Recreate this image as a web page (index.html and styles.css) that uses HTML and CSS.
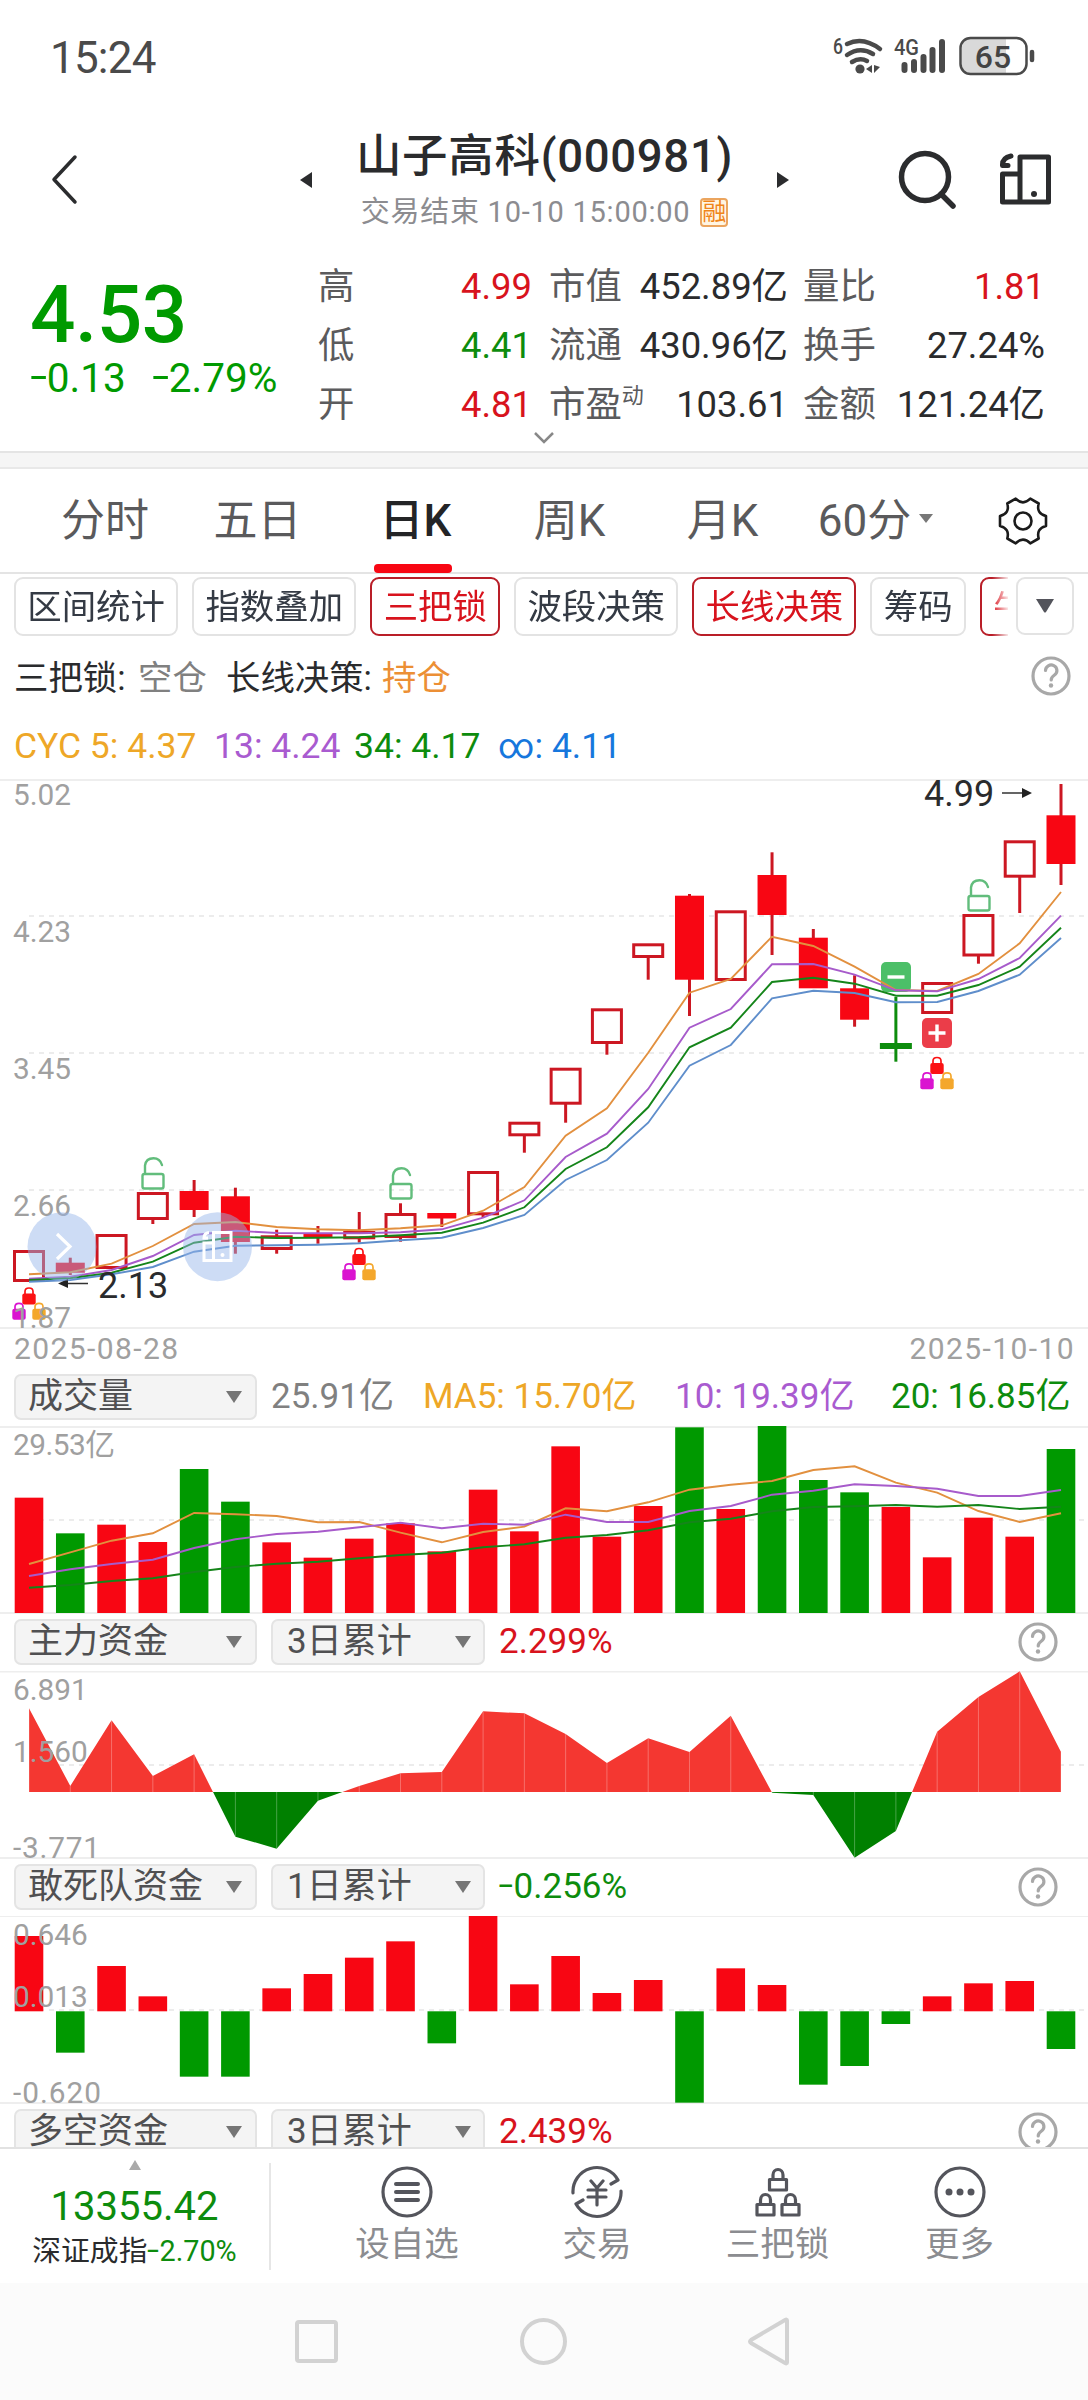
FILE: index.html
```html
<!DOCTYPE html>
<html lang="zh-CN">
<head>
<meta charset="utf-8">
<title>山子高科(000981)</title>
<link rel="stylesheet" href="styles.css">
</head>
<body>
<div class="status">
  <span class="clock">15:24</span>
  <svg class="status-icons" width="206" height="44" viewBox="832 35 206 44">
    <text x="833" y="54" class="tiny" textLength="10" lengthAdjust="spacingAndGlyphs">6</text>
    <g fill="none" stroke="#4a4a4a" stroke-width="4.5" stroke-linecap="round">
      <path d="M847 44Q863 36 880 49M847 55Q860 46 873 54M852 62Q860 57 867 61"/>
    </g>
    <circle cx="860" cy="69" r="4.6" fill="#4a4a4a"/>
    <path d="M866 69l6-4v8zM874 65v8l6-6z" fill="#4a4a4a"/>
    <text x="894" y="55" class="tiny" textLength="25" lengthAdjust="spacingAndGlyphs">4G</text>
    <g stroke="#4a4a4a" stroke-width="6" stroke-linecap="round">
      <path d="M904.500 65v5M914 62v8M923.500 57v13M932.500 50v20M942 42v28"/>
    </g>
    <path d="M970 38.500h36v35h-36a8 8 0 0 1-8-8v-19a8 8 0 0 1 8-8z" fill="#d9d9d9"/>
    <rect x="960.500" y="38" width="66" height="36" rx="10" fill="none" stroke="#4a4a4a" stroke-width="2.500"/>
    <path d="M1032 52v8" stroke="#4a4a4a" stroke-width="4.500" stroke-linecap="round"/>
    <text x="993" y="67.500" class="battery" text-anchor="middle">65</text>
  </svg>
</div>

<header class="header">
  <svg class="back" width="30" height="52" viewBox="0 0 30 52"><path d="M25 3L4 25.500L25 48" /></svg>
  <svg class="prev" width="14" height="18" viewBox="0 0 14 18"><path d="M0 9L12 1v16z"/></svg>
  <div class="title">
    <h1>山子高科(000981)</h1>
    <p>交易结束 10-10 15:00:00 <b>融</b></p>
  </div>
  <svg class="next" width="14" height="18" viewBox="0 0 14 18"><path d="M13 9L1 1v16z"/></svg>
  <svg class="search" width="60" height="60" viewBox="896 150 60 60"><circle cx="924" cy="177" r="23.500"/><path d="M940 194l12 12"/></svg>
  <svg class="switch" width="54" height="54" viewBox="998 153 54 54"><use href="#switch-glyph"/></svg>
</header>

<section class="quote">
  <div class="price">
    <strong>4.53</strong>
    <div><span><i class="dash">-</i>0.13</span><span><i class="dash">-</i>2.79%</span></div>
  </div>
  <div class="figures">
    <span>高</span><b class="up">4.99</b><span>市值</span><b>452.89亿</b><span>量比</span><b class="up">1.81</b>
    <span>低</span><b class="down">4.41</b><span>流通</span><b>430.96亿</b><span>换手</span><b>27.24%</b>
    <span>开</span><b class="up">4.81</b><span>市盈<sup>动</sup></span><b>103.61</b><span>金额</span><b>121.24亿</b>
  </div>
  <svg class="expand" width="22" height="14" viewBox="0 0 22 14"><path d="M2 2l9 9l9-9"/></svg>
</section>

<nav class="tabs">
  <span>分时</span><span>五日</span><span class="active">日K</span><span>周K</span><span>月K</span><span>60分<i></i></span>
  <svg width="50" height="50" viewBox="-25 -25 50 50"><path d="M23 4.900Q13 7.500 15.700 17.500L7.300 22.300Q0 15 -7.300 22.300L-15.700 17.500Q-13 7.500 -23 4.900V-4.900Q-13 -7.500 -15.700 -17.500L-7.300 -22.300Q0 -15 7.300 -22.300L15.700 -17.500Q13 -7.500 23 -4.900Z"/><circle r="8.500"/></svg>
</nav>

<div class="chips">
  <div class="chip-strip">
    <span>区间统计</span><span>指数叠加</span><span class="on">三把锁</span><span>波段决策</span><span class="on">长线决策</span><span>筹码</span><span class="on">牛</span>
  </div>
  <div class="more"><svg width="20" height="16" viewBox="0 0 20 16"><path d="M1 1h18l-8 13q-1 1-2 0z"/></svg></div>
</div>

<div class="strategy">
  <span class="k1">三把锁:</span><span class="gray">空仓</span><span class="k2">长线决策:</span><span class="hold">持仓</span>
  <svg class="help" width="42" height="42" viewBox="-21 -21 42 42"><use href="#help-glyph"/></svg>
</div>
<div class="cyc"><span class="gold">CYC 5: 4.37</span><span class="violet">13: 4.24</span><span class="down">34: 4.17</span><span class="azure">∞: 4.11</span></div>

<svg id="kline" width="1088" height="550" viewBox="0 779 1088 550"></svg>
<div class="dates"><span>2025-08-28</span><span>2025-10-10</span></div>

<div class="bar volume">
  <div class="select wide">成交量<i></i></div>
  <span class="v1">25.91亿</span><span class="v2">MA5: 15.70亿</span><span class="v3">10: 19.39亿</span><span class="v4">20: 16.85亿</span>
</div>
<svg id="volume" width="1088" height="188" viewBox="0 1426 1088 188"></svg>

<div class="bar">
  <div class="select wide">主力资金<i></i></div><div class="select">3日累计<i></i></div>
  <span class="value up">2.299%</span>
  <svg class="help" width="42" height="42" viewBox="-21 -21 42 42"><use href="#help-glyph"/></svg>
</div>
<svg id="main-fund" width="1088" height="188" viewBox="0 1671 1088 188"></svg>

<div class="bar">
  <div class="select wide">敢死队资金<i></i></div><div class="select">1日累计<i></i></div>
  <span class="value down"><i class="dash">-</i>0.256%</span>
  <svg class="help" width="42" height="42" viewBox="-21 -21 42 42"><use href="#help-glyph"/></svg>
</div>
<svg id="hot-fund" width="1088" height="188" viewBox="0 1916 1088 188"></svg>

<div class="bar cut">
  <div class="select wide">多空资金<i></i></div><div class="select">3日累计<i></i></div>
  <span class="value up">2.439%</span>
  <svg class="help" width="42" height="42" viewBox="-21 -21 42 42"><use href="#help-glyph"/></svg>
</div>

<footer class="dock">
  <div class="index">
    <svg width="12" height="10" viewBox="0 0 12 10"><path d="M6 0l6 10H0z"/></svg>
    <strong>13355.42</strong>
    <p>深证成指<em><i class="dash">-</i>2.70%</em></p>
  </div>
  <div class="item">
    <svg width="54" height="54" viewBox="-27 -27 54 54"><circle r="24"/><path d="M-11 -8H11M-11 0H11M-11 8H11" stroke-width="4"/></svg>
    <span>设自选</span>
  </div>
  <div class="item">
    <svg width="54" height="54" viewBox="-27 -27 54 54"><path d="M-24 1A24 24 0 0 1 21 -12L14 -8M24 -1A24 24 0 0 1 -21 12L-14 8M-6 -11L0 -4L6 -11M0 -4V13M-9 -2H9M-9 5H9"/></svg>
    <span>交易</span>
  </div>
  <div class="item">
    <svg width="54" height="54" viewBox="-27 -27 54 54"><g id="lock-outline"><path d="M-8.500 -12.500H8.500V-2H-8.500ZM-5 -13V-17A5 5.500 0 0 1 5 -17V-13"/></g><use href="#lock-outline" x="-12.500" y="25"/><use href="#lock-outline" x="12.500" y="25"/></svg>
    <span>三把锁</span>
  </div>
  <div class="item">
    <svg width="54" height="54" viewBox="-27 -27 54 54"><circle r="24"/><g fill="#54555c" stroke="none"><circle cx="-11" r="3.500"/><circle r="3.500"/><circle cx="11" r="3.500"/></g></svg>
    <span>更多</span>
  </div>
</footer>

<div class="system">
  <svg width="1088" height="117" viewBox="0 2283 1088 117"><rect x="297" y="2322" width="39" height="39" rx="2"/><circle cx="543.500" cy="2341.500" r="21.500"/><path d="M787 2320.500V2362.500Q787 2364 785 2363L751 2343Q749 2341.500 751 2340L785 2320Q787 2319 787 2320.500Z"/></svg>
</div>

<svg class="defs" width="0" height="0">
  <defs>
    <g id="help-glyph" fill="none" stroke="#a8a8a8" stroke-width="3.200" stroke-linecap="round">
      <circle r="18"/><path d="M-5.500 -5.500A5.700 5.500 0 1 1 3.500 -1Q0.200 1.200 0.200 4"/><circle cy="9.500" r="2.200" fill="#a8a8a8" stroke="none"/>
    </g>
    <g id="switch-glyph" fill="none" stroke="#2b2c2e" stroke-width="5" stroke-linejoin="round" stroke-linecap="round">
      <path d="M1019 157h28.500v45h-28.500zM1019 174H1001.500V202H1019M1010 156Q1001 158 1001.500 165.500H1007"/>
      <circle cx="1033" cy="194" r="3" fill="#2b2c2e" stroke="none"/>
    </g>
  </defs>
</svg>
<script src="charts.js"></script>
</body>
</html>
```
FILE: styles.css
```css
* { box-sizing: border-box; }
body {
  margin: 0;
  width: 1088px;
  height: 2400px;
  overflow: hidden;
  background: #fff;
  color: #2a2b2d;
  font-family: Roboto, "Noto Sans CJK SC", sans-serif;
}
svg { display: block; flex: none; }
h1, p { margin: 0; font-weight: 400; }
b, strong { font-weight: 400; }
.defs { position: absolute; }

.up { color: #d8131d; }
.down { color: #0d8c0d; }
.gray { color: #808080; }
.hold { color: #ec8f35; }
.gold { color: #eea727; }
.violet { color: #a95bd0; }
.azure { color: #1677dd; }

/* widened minus sign, raised to the middle of the digits */
.dash { display: inline-block; margin: 0 0.07em; font-style: normal; transform: translateY(-0.05em) scaleX(1.5); }

/* status bar */
.status { height: 110px; padding: 35px 50px 0 50px; display: flex; justify-content: space-between; }
.status-icons { overflow: visible; }
.clock { font-size: 44px; line-height: 46px; color: #4a4a4a; letter-spacing: -0.8px; }
.tiny { font: 500 22px Roboto, sans-serif; fill: #4a4a4a; }
.battery { font: 500 32px Roboto, sans-serif; fill: #444; }

/* title bar */
.header { height: 140px; display: flex; align-items: flex-start; }
.back { margin: 44px 0 0 50px; fill: none; stroke: #2b2c2e; stroke-width: 3.5; stroke-linecap: round; stroke-linejoin: round; }
.prev { margin: 61px 0 0 220px; fill: #2b2c2e; }
.next { margin: 61px 0 0 31px; fill: #2b2c2e; }
.title { margin-left: 30px; width: 401px; text-align: center; }
.title h1 { margin-top: 14px; font-size: 45.5px; line-height: 66px; letter-spacing: 0.7px; font-weight: 500; white-space: nowrap; }
.title p { display: flex; align-items: center; justify-content: center; margin-top: 2px; font-size: 29px; line-height: 40px; letter-spacing: 0.75px; color: #8c8c90; white-space: pre; }
.title b { margin-left: 2px; width: 28px; height: 29px; border: 2px solid #eba55f; border-radius: 4px; background: #fff5e3; color: #f08519; font-size: 24px; line-height: 24px; letter-spacing: 0; text-align: center; }
.search { margin: 40px 0 0 107px; fill: none; stroke: #2b2c2e; stroke-width: 5.5; stroke-linecap: round; }
.switch { margin: 43px 0 0 42px; }

/* quote */
.quote { position: relative; height: 203px; display: flex; border-bottom: 2px solid #e4e4e4; }
.price { width: 318px; padding: 23px 0 0 30px; color: #009a00; }
.price strong { display: block; font-size: 80px; line-height: 84px; font-weight: 500; letter-spacing: -0.5px; }
.price div { display: flex; gap: 26px; font-size: 40.5px; line-height: 42px; }
.figures { height: 178px; margin-top: 7px; width: 727px; display: grid; grid-template-columns: 70px 144px 17px 72px 167px 15px 75px 167px; grid-auto-rows: 59px; align-items: center; font-size: 36.4px; line-height: 59px; white-space: nowrap; }
.figures span:nth-of-type(3n+1) { grid-column: 1; }
.figures span:nth-of-type(3n+2) { grid-column: 4; }
.figures span:nth-of-type(3n) { grid-column: 7; }
.figures span { color: #5b5b5d; }
.figures b { text-align: right; }
.figures sup { font-size: 22px; line-height: 20px; vertical-align: 14px; }
.expand { position: absolute; left: 533px; top: 181px; fill: none; stroke: #888; stroke-width: 2.5; }

/* period tabs */
.tabs { margin-top: 14px; border-top: 2px solid #e8e8e8; border-bottom: 2px solid #e4e4e4; height: 107px; display: grid; grid-template-columns: 152px 153px 163px 145px 161px 145px 1fr; padding-left: 29px; color: #5a5a5c; font-size: 44px; line-height: 104px; text-align: center; box-shadow: 0 -14px 0 #f5f5f5; }
.tabs span { position: relative; white-space: nowrap; }
.tabs .active { color: #232426; font-weight: 500; }
.tabs .active::after { content: ""; position: absolute; left: 40px; bottom: 0; width: 78px; height: 9px; border-radius: 4px; background: #f80613; }
.tabs i { display: inline-block; margin-left: 8px; vertical-align: 13px; border: 7px solid transparent; border-top: 9px solid #777; border-bottom: 0; }
.tabs svg { margin: 27px 0 0 50px; fill: none; stroke: #1b1b1b; stroke-width: 2.6; stroke-linejoin: round; }

/* indicator chips */
.chips { height: 67px; padding: 3px 14px 0; display: flex; justify-content: space-between; }
.chip-strip { width: 994px; display: flex; gap: 14px; overflow: hidden; -webkit-mask-image: linear-gradient(90deg, #000 978px, transparent 996px); mask-image: linear-gradient(90deg, #000 978px, transparent 996px); }
.chip-strip span { flex: none; height: 59px; border: 2px solid #e3e3e3; border-radius: 9px; padding: 0 11.3px; font-size: 34.4px; line-height: 56px; color: #343a44; }
.chip-strip .on { color: #d8131d; border-color: #b91e28; }
.more { width: 58px; height: 58px; border: 2px solid #e3e3e3; border-radius: 9px; display: flex; align-items: center; justify-content: center; fill: #53545b; }

/* indicator captions */
.strategy { height: 72px; padding: 0 0 5px 14px; display: grid; grid-template-columns: 124px 88px 156px 648px auto; align-items: center; font-size: 34.4px; }
.strategy .help { margin-top: 2px; }
.cyc { height: 66px; padding-left: 14px; display: grid; grid-template-columns: 200px 140px 144px auto; align-items: center; font-size: 35.5px; }
.dates { height: 42px; padding: 0 13px 0 14px; display: flex; justify-content: space-between; font-size: 30px; line-height: 39px; letter-spacing: 1.4px; color: #a0a0a0; }

/* indicator pane headers */
.bar { height: 57px; padding: 5px 0 0 14px; display: flex; font-size: 35px; line-height: 46px; white-space: nowrap; }
.bar.volume { height: 55px; padding-top: 3px; }
.bar.cut { height: 43px; overflow: hidden; }
.select { width: 214px; height: 46px; margin-right: 14px; padding: 0 12px 0 14px; border: 2px solid #e4e4e4; border-radius: 7px; background: #f4f4f4; color: #505052; line-height: 42px; display: flex; align-items: center; justify-content: space-between; }
.select.wide { width: 243px; margin-right: 14px; padding: 0 13px 0 12px; }
.select i { border: 8px solid transparent; border-top: 12px solid #757575; border-bottom: 0; }
.bar .value { width: 518px; }
.v1 { width: 152px; color: #808080; }
.v2 { width: 252px; color: #eea727; }
.v3 { width: 216px; color: #a95bd0; }
.v4 { color: #0d8c0d; }
.bar .help { margin-top: 2px; }

/* chart primitives */
.frame { stroke: #eee; stroke-width: 2; }
.grid { stroke: #ececec; stroke-width: 2; stroke-dasharray: 5 5; }
.axis { font: 29.8px Roboto, "Noto Sans CJK SC", sans-serif; fill: #a0a0a0; }
.extreme { font: 36px Roboto, sans-serif; fill: #2a2b2d; }
.line { fill: none; stroke-width: 1.9; }
.solid-r { fill: #f80613; }
.solid-g { fill: #009900; }
.hollow { fill: #fff; stroke: #cc1722; stroke-width: 3; }
.wick { stroke: #cc1722; stroke-width: 3; }
.green { stroke: #0d8c0d; }
.area-r { fill: #f43731; }
.area-g { fill: #008000; }

/* bottom dock */
.dock { height: 136px; border-top: 2px solid #e2e2e2; display: grid; grid-template-columns: 271px 272px 108px 253px 111px 73px; background: #fff; }
.index { height: 107px; margin-top: 14px; border-right: 2px solid #e6e6e6; display: flex; flex-direction: column; align-items: center; fill: #aaa; white-space: nowrap; }
.index svg { margin-top: -3px; }
.index strong { margin-top: 12px; font-size: 40px; line-height: 50px; color: #0d8c0d; }
.index p { margin-top: 2px; font-size: 28.8px; line-height: 34px; }
.index em { font-style: normal; color: #0d8c0d; }
.item { padding-top: 16px; display: flex; flex-direction: column; align-items: center; color: #8b8c90; font-size: 34.5px; line-height: 50px; white-space: nowrap; }
.item svg { fill: none; stroke: #54555c; stroke-width: 3.2; stroke-linecap: round; stroke-linejoin: round; }
.system { height: 117px; background: #fbfbfb; }
.system svg { fill: none; stroke: #d2d2d2; stroke-width: 4; }
```
FILE: charts.js
```js
const STEP = 41.28, X0 = 29;
const cx = i => X0 + STEP * i;
const poly = (ys, color, f = y => y) =>
  `<polyline class="line" stroke="${color}" points="${ys.map((y, i) => cx(i).toFixed(1) + ',' + f(y).toFixed(1)).join(' ')}"/>`;
const frame = y => `<path class="frame" d="M0 ${y}H1088"/>`;
const grid = y => `<path class="grid" d="M29 ${y}H1088"/>`;
const label = (y, t, w) => `<text class="axis" x="13" y="${y}"${w ? ` textLength="${w}"` : ''}>${t}</text>`;
const COLORS = ['#e2903f', '#a75bcb', '#15851a', '#5f8ecb'];

/* daily candles: [type, bodyTop, bodyBottom, wickTop, wickBottom] */
const candles = [
  ['h',1250,1282],['r',1262.7,1272.7,1257.7,1275],['h',1234,1269],['h',1192,1220,1192,1224],
  ['r',1191,1210,1180,1217],['r',1196.3,1242,1187.7,1253.7],['h',1235.3,1250,1229.7,1253.7],['r',1233,1237.5,1226,1243.7],
  ['h',1231,1239.3,1212,1242.7],['h',1213,1238,1203.3,1241.7],['r',1213,1218.5,1213,1227],['h',1171,1215.3,1171,1217.7],
  ['h',1121.7,1136.3,1122,1152.7],['h',1067.7,1104.7,1068,1122.7],['h',1008.3,1044,1009,1054.7],['h',943.3,958,944,979.7],
  ['r',895.7,979.7,894,1016],['h',910.3,981],['r',875,915,852.3,955],['r',937.7,988.3,929,988],
  ['r',988.3,1019.7,975.3,1026.7],['g',1043,1049,997,1061.7],['h',982,1014],['h',914,956.5,914,963.7],
  ['h',840.3,877.7,841,913],['r',815.3,864,784,885]
];
const cyc = [
  [1274.3,1272.3,1263.7,1246,1224,1222,1227,1229.3,1230.3,1228.3,1225.3,1210.7,1187,1135.7,1108.3,1052.7,992.7,979,936.7,946,966.7,990,991,974,943.3,892],
  [1278.7,1276.7,1270,1256,1235,1230.7,1233,1233.3,1233.3,1232.3,1229.3,1217.7,1200.3,1157,1133.7,1089,1027.7,1009,964.3,964,974.7,990.3,991.3,979,958,915.7],
  [1280,1278.3,1272.7,1261.7,1242.7,1236.7,1238,1237.7,1237.3,1235.3,1232.7,1222.7,1207.3,1169,1147.3,1107.3,1047.3,1027.7,982,977.7,983.7,995.7,995.7,985,966.7,927.7],
  [1281.7,1280,1274.3,1267,1251.7,1245.7,1245.3,1244.7,1243.3,1240.3,1237.7,1228,1215,1180,1160,1122.7,1065.7,1045,998.3,990.7,993,1002.3,1002,991,974.7,938]
];
const candle = ([t, a, b, hi, lo], i) => {
  const x = cx(i), g = t === 'g' ? ' green' : '';
  const wick = hi ? `<path class="wick${g}" d="M${x} ${hi}V${lo}"/>` : '';
  return wick + (t === 'r'
    ? `<rect class="solid-r" x="${x - 14.5}" y="${a}" width="29" height="${b - a}"/>`
    : `<rect class="hollow${g}" x="${x - 14.5}" y="${a + 1.5}" width="29" height="${b - a - 3}"/>`);
};
const unlock = (x, y) => `<g transform="translate(${x} ${y})" fill="none" stroke="#62bd7c" stroke-width="2.4" stroke-linecap="round"><rect x="-10.500" y="17" width="21" height="14.500" rx="2"/><path d="M-8 16V8.500Q-7 1.200 0.500 1.200Q7 1.200 9 8"/></g>`;
const lock = (x, y, c) => `<g transform="translate(${x} ${y})"><rect x="-6.700" y="6.500" width="13.400" height="11" rx="2" fill="${c}"/><path d="M-4 7V4.500Q-4 1 0 1Q4 1 4 4.500V7" fill="none" stroke="${c}" stroke-width="1.700"/></g>`;
const locks = (x, y) => lock(x, y, '#fb1214') + lock(x - 10, y + 15.3, '#da14d0') + lock(x + 10, y + 15.3, '#f4a72c');
const badge = (x, y, c, d) => `<rect x="${x - 15}" y="${y}" width="30" height="30" rx="5" fill="${c}"/><path d="${d}" transform="translate(${x} ${y + 15})" stroke="#fff" stroke-width="3.400"/>`;

document.getElementById('kline').innerHTML =
  frame(780) + frame(1328) + grid(916) + grid(1053) + grid(1190) +
  candles.map(candle).join('') +
  unlock(153, 1157) + unlock(401, 1167) + unlock(979, 879) +
  badge(896, 962, '#4cbf68', 'M-8.500 0H8.500') + badge(937, 1018, '#eb3d49', 'M-8.500 0H8.500M0 -8.500V8.500') +
  locks(29, 1287) + locks(359, 1247.500) + locks(937, 1056.500) +
  cyc.map((l, k) => poly(l, COLORS[k])).join('') +
  label(805, '5.02') + label(942, '4.23') + label(1079, '3.45') + label(1216, '2.66') + label(1328, '1.87') +
  `<path d="M64 1283.500H88M1002 793H1026" stroke="#333" stroke-width="1.600"/><path d="M58 1283.500l10-4.500v9zM1032 793l-10-5v10z" fill="#222"/>
   <text class="extreme" x="98" y="1298">2.13</text><text class="extreme" x="924" y="806">4.99</text>
   <g fill="#96b6eb" fill-opacity=".48"><circle cx="62" cy="1246.700" r="34.500"/><circle cx="217.500" cy="1246.700" r="34.500"/></g>
   <path d="M57 1234l13 12.500l-13 12.500" fill="none" stroke="#fff" stroke-width="3.200"/>
   <g fill="none" stroke="#fff" stroke-width="3"><path d="M213.500 1232.500h17.500v28h-17.500zM213.500 1243h-9.500v17.500h9.500M209 1232.500q-5 .5-5 5.500h4"/></g><circle cx="222.500" cy="1255" r="2" fill="#fff"/>`;

/* traded amount with moving averages */
const vol = y => 1330 + y / 3;
const bars = [503,610,584,636,417,515,637,683,626,580,664,479,604,349,620,528,292,537,288,450,487,531,682,563,620,357];
const falling = [1, 4, 5, 16, 18, 19, 20, 25];
const ma = [
  [702,667,632,610,549,553,558,577,576,608,637,606,590,535,544,517,479,464,453,420,409,458,488,543,576,550],
  [738,718,702,689,654,628,612,605,592,578,595,581,584,554,576,576,543,528,494,482,463,468,476,498,498,480],
  [773,765,753,745,726,711,701,695,685,675,668,652,643,623,615,601,577,566,544,531,529,525,530,525,537,530]
];
document.getElementById('volume').innerHTML =
  frame(1427) + frame(1613) + grid(1520) +
  bars.map((v, i) => `<rect class="solid-${falling.includes(i) ? 'g' : 'r'}" x="${cx(i) - 14.3}" y="${vol(v)}" width="28.600" height="${1613 - vol(v)}"/>`).join('') +
  ma.map((l, k) => poly(l, COLORS[k], vol)).join('') + label(1455, '29.53亿', 102);

/* three-day main fund flow */
const flow = [325,558,361,528,463,710,746,602,558,520,516,334,340,402,489,415,456,347,578,585,773,693,395,291,214,456];
const pts = `29,1792 ` + flow.map((v, i) => `${cx(i)},${1600 + v / 3}`).join(' ') + ` 1061,1792`;
document.getElementById('main-fund').innerHTML =
  frame(1671.500) + frame(1858) + grid(1765) +
  `<clipPath id="above"><rect y="1600" width="1088" height="192"/></clipPath><clipPath id="below"><rect y="1792" width="1088" height="100"/></clipPath>
   <polygon class="area-r" clip-path="url(#above)" points="${pts}"/><polygon class="area-g" clip-path="url(#below)" points="${pts}"/>` +
  flow.map((v, i) => `<path d="M${cx(i)} 1792V${1600 + v / 3}" stroke="#fff" stroke-opacity=".28"/>`).join('') +
  label(1700, '6.891') + label(1762, '1.560') + label(1858, '-3.771', 87);

/* one-day hot money flow */
const hot = [168,518,258,349,590,590,325,282,233,184,490,108,313,228,339,300,668,265,315,614,558,432,349,310,303,507];
document.getElementById('hot-fund').innerHTML =
  frame(1916) + frame(2103) + grid(2010) +
  hot.map((v, i) => { const y = 1880 + v / 3, z = 2011.300;
    return `<rect class="solid-${y > z ? 'g' : 'r'}" x="${cx(i) - 14.3}" y="${Math.min(y, z)}" width="28.600" height="${Math.abs(y - z)}"/>`; }).join('') +
  label(1945, '0.646') + label(2007, '0.013') + label(2103, '-0.620', 88);
```
